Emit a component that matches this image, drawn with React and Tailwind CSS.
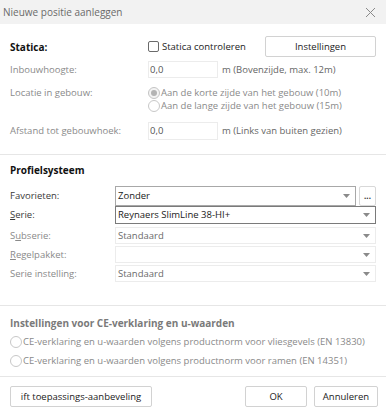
const font = { fontFamily: '"Open Sans", "Noto Sans", sans-serif' }

function Arrow() {
  return (
    <svg width="7" height="4" viewBox="0 0 7 4" className="shrink-0">
      <path d="M0 0 L7 0 L3.5 4 Z" fill="#8a8a8a" />
    </svg>
  )
}

function Radio({ checked, label }) {
  return (
    <div className="flex items-center h-[13px]">
      <span className={`w-[12px] h-[12px] rounded-full border shrink-0 flex items-center justify-center ${checked ? 'border-[#c4c4c4] bg-[#f4f4f4]' : 'border-[#c8c8c8] bg-white'}`}>
        {checked && <span className="w-[6px] h-[6px] rounded-full bg-[#b4b4b4]" />}
      </span>
      <span className="ml-[1px] text-[#8a8a8a]">{label}</span>
    </div>
  )
}

function Select({ value, border, dim }) {
  return (
    <div className={`flex-1 flex items-center justify-between pl-[2px] pr-[5px] border ${border} bg-white h-full`}>
      <span className={dim ? 'text-[#6a6a6a]' : 'text-[#1a1a1a]'}>{value}</span>
      <Arrow />
    </div>
  )
}

function SelRow({ label, value, h, mt, border = 'border-[#ececec]', dim, extra }) {
  return (
    <div className={`flex items-stretch ${h} ${mt}`}>
      <div className={`w-[105px] flex items-center ${dim ? 'text-[#8a8a8a]' : 'text-[#3a3a3a]'}`}>{label}</div>
      <Select value={value} border={border} dim={dim} />
      {extra}
    </div>
  )
}

export default function App() {
  return (
    <div style={font} className="w-[386px] h-[411px] bg-white text-[9.5px] leading-none overflow-hidden flex flex-col">
      {/* title bar */}
      <div className="h-[24px] bg-[#f2f2f2] flex items-center justify-between pl-[3px] pr-[10px] shrink-0">
        <span className="text-[10px] text-[#6a6a6a]">Nieuwe positie aanleggen</span>
        <svg width="11" height="11" viewBox="0 0 11 11">
          <path d="M1 1 L10 10 M10 1 L1 10" stroke="#8a8a8a" strokeWidth="1" />
        </svg>
      </div>

      {/* statica */}
      <div className="px-[10px] pt-[12px]">
        <div className="flex items-center h-[21px]">
          <div className="w-[138px] font-bold text-[10px] text-[#111]">Statica:</div>
          <span className="w-[11px] h-[11px] border border-[#6a6a6a] rounded-[2px] bg-white shrink-0" />
          <span className="ml-[3px] text-[#222]">Statica controleren</span>
          <button className="ml-auto w-[111px] h-[21px] border border-[#d2d2d2] rounded-[2px] bg-white text-[#222]">Instellingen</button>
        </div>
        <div className="flex items-center h-[17px] mt-[4px]">
          <div className="w-[138px] text-[#8a8a8a]">Inbouwhoogte:</div>
          <div className="w-[70px] h-full border border-[#ececec] flex items-center pl-[1px] text-[#555]">0,0</div>
          <span className="ml-[4px] text-[#666]">m (Bovenzijde, max. 12m)</span>
        </div>
        <div className="flex mt-[8px]">
          <div className="w-[138px] text-[#8a8a8a] pt-[2px]">Locatie in gebouw:</div>
          <div className="flex flex-col">
            <Radio checked label="Aan de korte zijde van het gebouw (10m)" />
            <Radio label="Aan de lange zijde van het gebouw (15m)" />
          </div>
        </div>
        <div className="flex items-center h-[18px] mt-[10px]">
          <div className="w-[138px] text-[#8a8a8a]">Afstand tot gebouwhoek:</div>
          <div className="w-[70px] h-full border border-[#ececec] flex items-center pl-[1px] text-[#555]">0,0</div>
          <span className="ml-[4px] text-[#666]">m (Links van buiten gezien)</span>
        </div>
      </div>

      <div className="h-px bg-[#e6e6e6] mt-[14px] shrink-0" />

      {/* profielsysteem */}
      <div className="px-[10px] pt-[10px]">
        <div className="font-bold text-[10px] text-[#111] h-[10px]">Profielsysteem</div>
        <SelRow label="Favorieten:" value="Zonder" h="h-[20px]" mt="mt-[11px]" border="border-[#a8a8a8]" extra={
          <div className="ml-[3px] w-[17px] h-full border border-[#d8d8d8] rounded-[2px] flex items-center justify-center text-[#333] font-bold text-[8px]">...</div>
        } />
        <SelRow label={<span><span className="underline">S</span>erie:</span>} value="Reynaers SlimLine 38-HI+" h="h-[18px]" mt="mt-0" border="border-[#7a7a7a]" />
        <SelRow label={<span>S<span className="underline">u</span>bserie:</span>} value="Standaard" h="h-[17px]" mt="mt-[3px]" dim />
        <SelRow label={<span><span className="underline">R</span>egelpakket:</span>} value="" h="h-[17px]" mt="mt-[2px]" dim />
        <SelRow label="Serie instelling:" value="Standaard" h="h-[17px]" mt="mt-[2px]" dim />
      </div>

      <div className="h-px bg-[#e6e6e6] mt-[23px] shrink-0" />

      {/* CE */}
      <div className="px-[10px] pt-[12px]">
        <div className="font-bold text-[10px] text-[#7a7a7a] h-[10px]">Instellingen voor CE-verklaring en u-waarden</div>
        <div className="mt-[7px] flex flex-col gap-[6px]">
          <Radio label="CE-verklaring en u-waarden volgens productnorm voor vliesgevels (EN 13830)" />
          <Radio label="CE-verklaring en u-waarden volgens productnorm voor ramen (EN 14351)" />
        </div>
      </div>

      <div className="h-px bg-[#e6e6e6] mt-[9px] shrink-0" />

      {/* footer */}
      <div className="flex items-center px-[10px] pt-[9px] pr-[8px]">
        <button className="w-[142px] h-[21px] border border-[#d2d2d2] rounded-[2px] bg-white text-[#222]">ift toepassings-aanbeveling</button>
        <button className="ml-auto w-[62px] h-[21px] border border-[#d2d2d2] rounded-[2px] bg-white text-[#222]">OK</button>
        <button className="ml-[7px] w-[64px] h-[21px] border border-[#d2d2d2] rounded-[2px] bg-white text-[#222]">Annuleren</button>
      </div>
    </div>
  )
}
